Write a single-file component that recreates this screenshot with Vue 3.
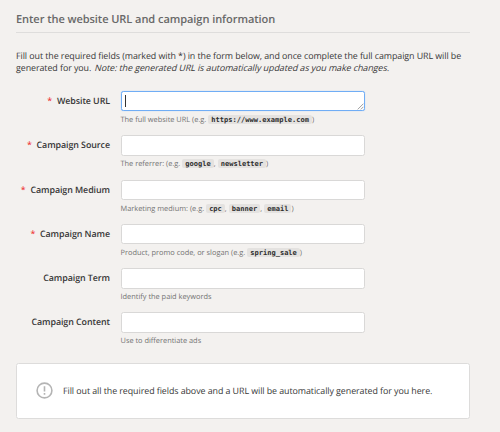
<script setup>
import { ref } from 'vue'

const fields = ref([
  { id: 'url', label: 'Website URL', required: true, active: true, before: 'The full website URL (e.g.', examples: ['https://www.example.com'], value: '' },
  { id: 'source', label: 'Campaign Source', required: true, before: 'The referrer: (e.g.', examples: ['google', 'newsletter'], value: '' },
  { id: 'medium', label: 'Campaign Medium', required: true, before: 'Marketing medium: (e.g.', examples: ['cpc', 'banner', 'email'], value: '' },
  { id: 'name', label: 'Campaign Name', required: true, before: 'Product, promo code, or slogan (e.g.', examples: ['spring_sale'], value: '' },
  { id: 'term', label: 'Campaign Term', before: 'Identify the paid keywords', examples: [], value: '' },
  { id: 'content', label: 'Campaign Content', before: 'Use to differentiate ads', examples: [], value: '' },
])
</script>

<template>
  <main class="page">
    <h2 class="title"><span>Enter the website URL and campaign information</span></h2>
    <p class="intro">
      <span>Fill out the required fields (marked with *) in the form below, and once complete the full campaign URL will be</span><br>
      <span>generated for you. <em>Note: the generated URL is automatically updated as you make changes.</em></span>
    </p>
    <form class="form">
      <div v-for="f in fields" :key="f.id" class="row">
        <label class="label" :for="f.id"><span v-if="f.required" class="star">*</span>{{ f.label }}</label>
        <div class="field">
          <div v-if="f.active" class="control active">
            <span class="caret"></span>
            <svg class="grip" viewBox="0 0 7 7"><path d="M0.7 6.4 6.4 0.7M3.8 6.4 6.4 3.8" /></svg>
          </div>
          <input v-else :id="f.id" v-model="f.value" class="control" type="text">
          <div class="help">{{ f.before }}<template v-for="(e, i) in f.examples" :key="e"><template v-if="i">,</template><code>{{ e }}</code></template><template v-if="f.examples.length">)</template></div>
        </div>
      </div>
    </form>
    <section class="result">
      <svg class="icon" viewBox="0 0 17 17"><circle cx="8.5" cy="8.5" r="7.4" /><path d="M8.5 4.2V9.5M8.5 11V12.8" /></svg>
      <span class="message">Fill out all the required fields above and a URL will be automatically generated for you here.</span>
    </section>
  </main>
</template>

<style>
body { margin: 0; background: #f3f1ef; }
</style>

<style scoped>
.page {
  box-sizing: border-box;
  width: 500px;
  height: 432px;
  padding: 11px 30.5px 0 16px;
  overflow: hidden;
  background: #f3f1ef;
  color: #373737;
  font-family: "Open Sans", "Noto Sans", sans-serif;
  font-size: 8.9px;
  letter-spacing: -0.07px;
  text-rendering: geometricPrecision;
}
.title {
  box-sizing: border-box;
  height: 22px;
  margin: 0;
  border-bottom: 1px solid #dedddc;
  color: #686868;
  font-size: 11.05px;
  font-weight: 600;
  line-height: 18px;
  white-space: nowrap;
}
.intro {
  height: 24px;
  margin: 17px 0 17px;
  line-height: 12px;
  white-space: nowrap;
}
.intro em {
  display: inline-block;
  margin-left: 1.2px;
  font-style: normal;
  letter-spacing: -0.055px;
  transform: skewX(-14deg);
}
.form { display: flex; flex-direction: column; }
.row {
  display: grid;
  grid-template-columns: 94px 244.5px;
  column-gap: 10.5px;
  height: 44.3px;
}
.label {
  height: 20px;
  line-height: 20.8px;
  font-weight: 600;
  text-align: right;
  white-space: nowrap;
}
.star { margin-right: 4.8px; color: #ee3b3b; }
.field { display: flex; flex-direction: column; }
.control {
  box-sizing: border-box;
  width: 244.5px;
  height: 20.6px;
  padding: 0 4px;
  border: 1px solid #d9d8d7;
  border-radius: 2.5px;
  outline: none;
  background: #fff;
  font: inherit;
}
.active {
  display: flex;
  justify-content: space-between;
  height: 20px;
  padding: 3px 0 0 3.3px;
  border-color: #70adf5;
  box-shadow: 0 0 1px #8dbff8;
}
.caret { width: 1px; height: 12px; background: #333; }
.grip { align-self: flex-end; width: 7px; height: 7px; fill: none; stroke: #777; stroke-width: 0.7; }
.help {
  height: 12px;
  margin-top: 2.4px;
  color: #747474;
  font-size: 7.4px;
  letter-spacing: 0;
  line-height: 12px;
  white-space: nowrap;
}
.active + .help { margin-top: 2.8px; }
code {
  display: inline-block;
  height: 9px;
  margin-left: 2px;
  padding: 0 3px;
  border-radius: 2px;
  background: #e4e2e0;
  color: #2e2e2e;
  font: bold 7.05px/9px "DejaVu Sans Mono", monospace;
}
.result {
  box-sizing: border-box;
  display: flex;
  align-items: center;
  height: 56px;
  margin-top: 6px;
  padding-left: 18.5px;
  border: 1px solid #dddcdb;
  border-radius: 2.5px;
  background: #fff;
}
.icon { width: 17px; height: 17px; margin-right: 10.5px; fill: none; stroke: #b4b4b4; stroke-width: 1.6; }
.message { white-space: nowrap; }
</style>
